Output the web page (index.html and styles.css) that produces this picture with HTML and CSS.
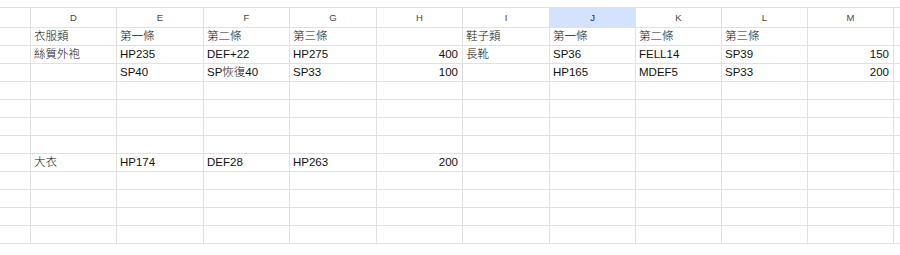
FILE: index.html
```html
<!DOCTYPE html>
<html lang="zh-Hant">
<head>
    <meta charset="UTF-8">
    <meta name="viewport" content="width=device-width, initial-scale=1.0">
    <title>裝備表</title>
    <link rel="stylesheet" href="styles.css">
</head>
<body>
    <div class="sheet">
        <!-- Column headers -->
        <div class="row head">
            <div class="cell"></div>
            <div class="cell">D</div>
            <div class="cell">E</div>
            <div class="cell">F</div>
            <div class="cell">G</div>
            <div class="cell">H</div>
            <div class="cell">I</div>
            <div class="cell selected">J</div>
            <div class="cell">K</div>
            <div class="cell">L</div>
            <div class="cell">M</div>
            <div class="cell"></div>
        </div>

        <div class="row">
            <div class="cell"></div>
            <div class="cell">衣服類</div>
            <div class="cell">第一條</div>
            <div class="cell">第二條</div>
            <div class="cell">第三條</div>
            <div class="cell"></div>
            <div class="cell">鞋子類</div>
            <div class="cell">第一條</div>
            <div class="cell">第二條</div>
            <div class="cell">第三條</div>
            <div class="cell"></div>
            <div class="cell"></div>
        </div>
        <div class="row">
            <div class="cell"></div>
            <div class="cell">絲質外袍</div>
            <div class="cell">HP235</div>
            <div class="cell">DEF+22</div>
            <div class="cell">HP275</div>
            <div class="cell num">400</div>
            <div class="cell">長靴</div>
            <div class="cell">SP36</div>
            <div class="cell">FELL14</div>
            <div class="cell">SP39</div>
            <div class="cell num">150</div>
            <div class="cell"></div>
        </div>
        <div class="row">
            <div class="cell"></div>
            <div class="cell"></div>
            <div class="cell">SP40</div>
            <div class="cell">SP恢復40</div>
            <div class="cell">SP33</div>
            <div class="cell num">100</div>
            <div class="cell"></div>
            <div class="cell">HP165</div>
            <div class="cell">MDEF5</div>
            <div class="cell">SP33</div>
            <div class="cell num">200</div>
            <div class="cell"></div>
        </div>
        <div class="row"><div class="cell"></div><div class="cell"></div><div class="cell"></div><div class="cell"></div><div class="cell"></div><div class="cell"></div><div class="cell"></div><div class="cell"></div><div class="cell"></div><div class="cell"></div><div class="cell"></div><div class="cell"></div></div>
        <div class="row"><div class="cell"></div><div class="cell"></div><div class="cell"></div><div class="cell"></div><div class="cell"></div><div class="cell"></div><div class="cell"></div><div class="cell"></div><div class="cell"></div><div class="cell"></div><div class="cell"></div><div class="cell"></div></div>
        <div class="row"><div class="cell"></div><div class="cell"></div><div class="cell"></div><div class="cell"></div><div class="cell"></div><div class="cell"></div><div class="cell"></div><div class="cell"></div><div class="cell"></div><div class="cell"></div><div class="cell"></div><div class="cell"></div></div>
        <div class="row"><div class="cell"></div><div class="cell"></div><div class="cell"></div><div class="cell"></div><div class="cell"></div><div class="cell"></div><div class="cell"></div><div class="cell"></div><div class="cell"></div><div class="cell"></div><div class="cell"></div><div class="cell"></div></div>
        <div class="row">
            <div class="cell"></div>
            <div class="cell">大衣</div>
            <div class="cell">HP174</div>
            <div class="cell">DEF28</div>
            <div class="cell">HP263</div>
            <div class="cell num">200</div>
            <div class="cell"></div>
            <div class="cell"></div>
            <div class="cell"></div>
            <div class="cell"></div>
            <div class="cell"></div>
            <div class="cell"></div>
        </div>
        <div class="row"><div class="cell"></div><div class="cell"></div><div class="cell"></div><div class="cell"></div><div class="cell"></div><div class="cell"></div><div class="cell"></div><div class="cell"></div><div class="cell"></div><div class="cell"></div><div class="cell"></div><div class="cell"></div></div>
        <div class="row"><div class="cell"></div><div class="cell"></div><div class="cell"></div><div class="cell"></div><div class="cell"></div><div class="cell"></div><div class="cell"></div><div class="cell"></div><div class="cell"></div><div class="cell"></div><div class="cell"></div><div class="cell"></div></div>
        <div class="row"><div class="cell"></div><div class="cell"></div><div class="cell"></div><div class="cell"></div><div class="cell"></div><div class="cell"></div><div class="cell"></div><div class="cell"></div><div class="cell"></div><div class="cell"></div><div class="cell"></div><div class="cell"></div></div>
        <div class="row"><div class="cell"></div><div class="cell"></div><div class="cell"></div><div class="cell"></div><div class="cell"></div><div class="cell"></div><div class="cell"></div><div class="cell"></div><div class="cell"></div><div class="cell"></div><div class="cell"></div><div class="cell"></div></div>
    </div>
</body>
</html>
```

FILE: styles.css
```css
/* General Styles */
body {
    margin: 0;
    padding-top: 7px;
    background: #fff;
    font-family: "Liberation Sans", Arial, "Noto Sans CJK TC", sans-serif;
    overflow: hidden;
}

/* Sheet grid */
.sheet {
    border-top: 1px solid #e1e1e1;
}

.row {
    display: grid;
    grid-template-columns: 31px 86px 87px 86px 87px 86px 87px 86px 86px 86px 86px 1fr;
    height: 18px;
}

.cell {
    box-sizing: border-box;
    border-right: 1px solid #e1e1e1;
    border-bottom: 1px solid #e1e1e1;
    padding: 0 3px;
    font-size: 11.5px;
    font-weight: 300;
    line-height: 17px;
    color: #111;
    white-space: nowrap;
}

.cell.num {
    text-align: right;
    padding-right: 4px;
}

/* Column header row */
.row.head {
    height: 20px;
}

.row.head .cell {
    text-align: center;
    font-size: 9.5px;
    line-height: 19px;
    color: #444;
}

.row.head .cell.selected {
    background: #d3e3fd;
    color: #0b2a5c;
}
```
